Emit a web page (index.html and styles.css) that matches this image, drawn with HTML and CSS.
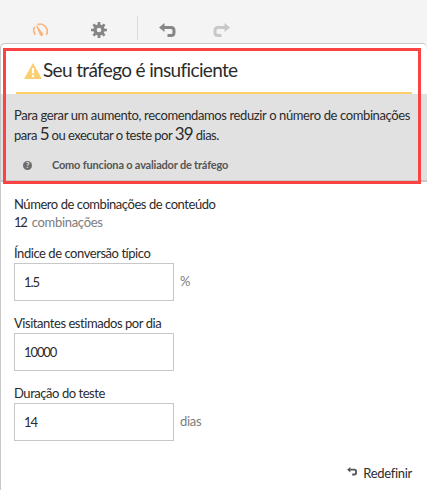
FILE: index.html
```html
<!DOCTYPE html>
<html lang="pt-BR">
<head>
<meta charset="utf-8">
<title>Avaliador de tráfego</title>
<link rel="stylesheet" href="styles.css">
</head>
<body>
<header class="toolbar">
  <svg class="tool gauge" width="18" height="14" viewBox="0 0 18 14" fill="none" stroke="#f9b27a"><path d="M3.4 11.8A7.3 7.3 0 0 1 2.6 3.8M5.6 1.5a7.3 7.3 0 0 1 8.8 10.3" stroke-width="1.6"/><path d="M4.4 2.4l6.4 8.4a1.4 1.4 0 0 1-2.4 1.4z" fill="#f9b27a" stroke="#f9b27a" stroke-width=".8"/></svg>
  <svg class="tool gear" width="16" height="16" viewBox="0 0 16 16" fill="none" stroke="#868686"><circle cx="8" cy="8" r="4" stroke-width="3.4"/><path d="M8 0v3M8 13v3M0 8h3M13 8h3M2.4 2.4l2.1 2.1M11.5 11.5l2.1 2.1M2.4 13.6l2.1-2.1M11.5 4.5l2.1-2.1" stroke-width="2.7"/></svg>
  <span class="divider"></span>
  <svg class="tool undo" width="18" height="15" viewBox="0 0 18 15"><path d="M5 4.5h7q3 0 3 3v2q0 3-3 3H8.5" fill="none" stroke="#868686" stroke-width="3"/><path d="M0 4.5L5.5 0v9z" fill="#868686"/></svg>
  <svg class="tool redo" width="18" height="15" viewBox="0 0 18 15"><path d="M13 4.5H6q-3 0-3 3v2q0 3 3 3h3.5" fill="none" stroke="#c8c8c8" stroke-width="3"/><path d="M18 4.5L12.5 0v9z" fill="#c8c8c8"/></svg>
</header>
<main class="panel">
  <div class="highlight"></div>
  <div class="heading">
    <svg width="18" height="16" viewBox="0 0 18 16"><path d="M9 0l9 16H0z" fill="#f9cf70"/><path d="M9 5v5.5M9 12v2.2" stroke="#fff" stroke-width="2.2"/></svg>
    <h1>Seu tráfego é insuficiente</h1>
  </div>
  <section class="advice">
    <p class="line1">Para gerar um aumento, recomendamos reduzir o número de combinações</p>
    <p class="line2">para <b>5</b> ou executar o teste por <b>39</b> dias.</p>
    <a class="help"><span class="help-icon">?</span><span class="help-text">Como funciona o avaliador de tráfego</span></a>
  </section>
  <form class="form">
    <div class="label combos">Número de combinações de conteúdo</div>
    <div class="count"><span class="number">12</span><span class="unit">combinações</span></div>
    <label class="label rate" for="rate">Índice de conversão típico</label>
    <div class="row"><input id="rate" value="1.5"><span class="unit percent">%</span></div>
    <label class="label visitors" for="visitors">Visitantes estimados por dia</label>
    <div class="row"><input id="visitors" value="10000"></div>
    <label class="label duration" for="duration">Duração do teste</label>
    <div class="row"><input id="duration" value="14"><span class="unit days">dias</span></div>
  </form>
  <div class="reset"><svg width="11" height="9" viewBox="0 0 18 15"><path d="M5 4.5h7q3 0 3 3v2q0 3-3 3H8.5" fill="none" stroke="#555" stroke-width="3"/><path d="M0 4.5L5.5 0v9z" fill="#555"/></svg><span>Redefinir</span></div>
</main>
</body>
</html>
```
FILE: styles.css
```css
* { box-sizing: border-box; }
body { margin: 0; width: 427px; height: 490px; overflow: hidden; background: #f4f4f4; color: #2b2b2b; font: 13px/18px Lato, "Noto Sans", sans-serif; letter-spacing: -.3px; white-space: nowrap; }
h1, p { margin: 0; font-weight: 400; }
.toolbar { height: 43px; display: flex; align-items: flex-start; padding: 16px 0 0 32px; }
.tool { display: block; flex: none; }
.gauge { margin-top: 7px; }
.gear { margin: 6px 0 0 41px; }
.divider { width: 1px; height: 24px; margin-left: 30px; background: #dcdcdc; }
.undo { margin: 7px 0 0 21px; }
.redo { margin: 7px 0 0 35px; }
.panel { position: relative; height: 447px; background: #fff; border: 1px solid #c8c8c8; border-right: 0; border-bottom: 0; border-radius: 5px 5px 0 0; }
.highlight { position: absolute; left: 2px; top: 4px; width: 418px; height: 136px; border: 3px solid #fc4343; }
.heading { height: 50px; margin: 0 15px; border-bottom: 2px solid #fccf69; display: flex; padding: 19px 0 0 8px; }
h1 { font-size: 19px; line-height: 26px; margin-top: -6px; margin-left: 1px; letter-spacing: -.65px; }
.advice { height: 88px; background: #e1e1e1; border-bottom: 2px solid #c8c8c8; padding: 12px 0 0 13px; }
.line1, .line2 { height: 19px; line-height: 19px; letter-spacing: -.38px; }
.line2 { line-height: 17px; letter-spacing: -.5px; }
.line2 b { font-size: 17px; font-weight: 400; line-height: 17px; letter-spacing: -.8px; }
.help { display: flex; align-items: center; margin-top: 12px; padding-left: 9px; height: 18px; color: #555; font-size: 11px; font-weight: 700; letter-spacing: -.19px; }
.help-icon { width: 9px; height: 9px; border-radius: 50%; background: #6c6c6c; color: #e1e1e1; font-size: 8px; font-weight: 700; line-height: 9px; letter-spacing: 0; text-align: center; }
.help-text { margin-left: 20px; }
.form { padding: 13px 0 0 13px; }
.label { display: block; height: 18px; letter-spacing: -.45px; }
.count { display: flex; gap: 5px; height: 18px; }
.number { letter-spacing: -1.2px; }
.unit { color: #7c7c7c; }
.rate { margin-top: 13px; }
.visitors, .duration { margin-top: 13px; }
.row { display: flex; height: 38px; margin-top: 1px; }
input { width: 160px; height: 38px; border: 1px solid #c8c8c8; border-radius: 0; background: #fff; padding: 0 9px; font: inherit; color: inherit; letter-spacing: -1.1px; }
.row .unit { margin: 9px 0 0 6px; }
.reset { position: absolute; right: 15px; bottom: 8px; display: flex; align-items: flex-start; gap: 5px; }
.reset svg { margin-top: 3px; }
```
